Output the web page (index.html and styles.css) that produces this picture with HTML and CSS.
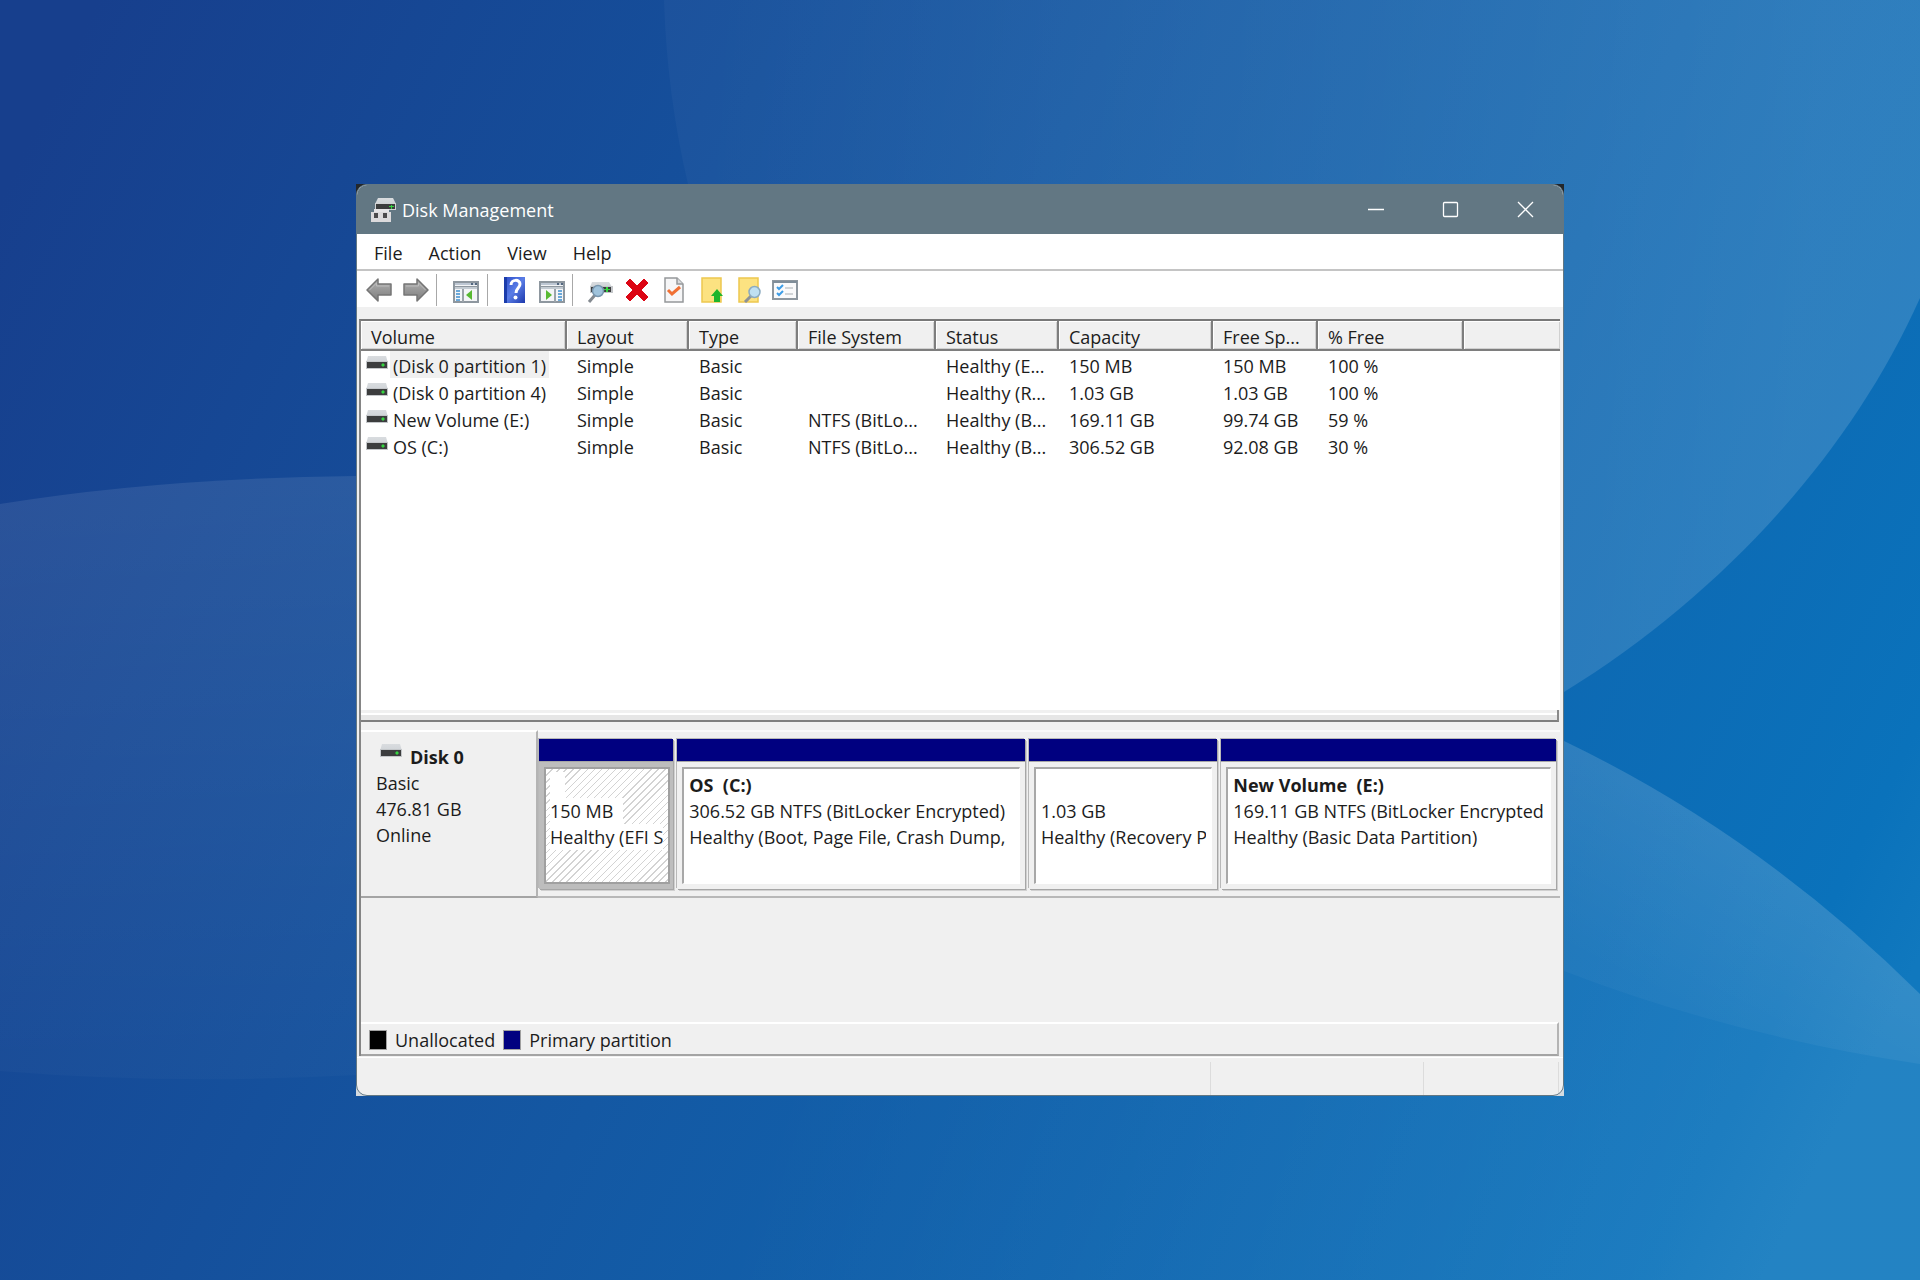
FILE: index.html
```
<!DOCTYPE html>
<html lang="en">
<head>
<meta charset="utf-8">
<title>Disk Management</title>
<link rel="stylesheet" href="styles.css">
</head>
<body>
<svg class="defs" aria-hidden="true">
  <defs>
    <linearGradient id="lid" x1="0" y1="0" x2="0" y2="1"><stop offset="0" stop-color="#d9dcdf"/><stop offset="1" stop-color="#cfd3d7"/></linearGradient>
    <linearGradient id="steel" x1="0" y1="0" x2="0" y2="1"><stop offset="0" stop-color="#b4b4b4"/><stop offset="1" stop-color="#7c7c7c"/></linearGradient>
    <linearGradient id="book" x1="0" y1="0" x2="1" y2="1"><stop offset="0" stop-color="#2b4cc8"/><stop offset=".5" stop-color="#5a7de6"/><stop offset="1" stop-color="#1c38ac"/></linearGradient>
    <symbol id="drive" viewBox="0 0 22 14"><path d="M2 0h18l2 7H0z" fill="url(#lid)"/><path d="M0 5h22v8H0z" fill="#c3c6c9"/><path d="M1 6h20v6H1z" fill="#3c3d3e"/><path d="M15 8.500h4v1h-4zM16 7.500h2v3h-2z" fill="#35d540"/></symbol>
    <symbol id="arrow" viewBox="0 0 26 24"><path d="M1 12 12 1v5h13v11H12v6z" fill="url(#steel)" stroke="#757575" stroke-width="1.5" stroke-linejoin="round"/><path d="M3.500 12 10.500 5v3H23" fill="none" stroke="#bcbcbc"/></symbol>
    <symbol id="pane" viewBox="0 0 26 22"><path d="M1 1h24v20H1z" fill="#f4f5f7" stroke="#8e979f" stroke-width="2"/><path d="M2 2h22v2H2z" fill="#bdc7d3"/><path d="M18 2h2v2h-2zM22 2h2v2h-2z" fill="#53677f"/><path d="M1 5h24v1H1z" fill="#8e979f"/><path d="M2 6h22v2H2z" fill="#c3cbd2"/><path d="M9 8h2v13H9z" fill="#9ba3aa"/><path d="M3 10h4M3 13h4M3 16h4M3 19h4" stroke="#3c8ed0" stroke-width="1.500"/><path d="M13 14l6-5v10z" fill="#58b932"/></symbol>
  </defs>
</svg>
<svg class="wallpaper" viewBox="0 0 1920 1280" preserveAspectRatio="none" aria-hidden="true">
  <defs>
    <linearGradient id="sky" gradientUnits="userSpaceOnUse" x1="0" y1="200" x2="1850" y2="1100"><stop offset="0" stop-color="#173f8d"/><stop offset=".45" stop-color="#1458a3"/><stop offset=".95" stop-color="#0a72bb"/><stop offset="1" stop-color="#1078be"/></linearGradient>
    <linearGradient id="orbA" gradientUnits="userSpaceOnUse" x1="700" y1="200" x2="1800" y2="300"><stop offset="0" stop-color="#fff" stop-opacity=".03"/><stop offset="1" stop-color="#fff" stop-opacity=".14"/></linearGradient>
    <linearGradient id="orbB" gradientUnits="userSpaceOnUse" x1="0" y1="480" x2="0" y2="1080"><stop offset="0" stop-color="#fff" stop-opacity=".09"/><stop offset="1" stop-color="#fff" stop-opacity=".02"/></linearGradient>
    <linearGradient id="orbC" gradientUnits="userSpaceOnUse" x1="1780" y1="820" x2="1680" y2="1010"><stop offset="0" stop-color="#fff" stop-opacity=".1"/><stop offset="1" stop-color="#fff" stop-opacity=".03"/></linearGradient>
    <linearGradient id="orbD" gradientUnits="userSpaceOnUse" x1="800" y1="1000" x2="1700" y2="1280"><stop offset="0" stop-color="#fff" stop-opacity="0"/><stop offset="1" stop-color="#fff" stop-opacity=".08"/></linearGradient>
  </defs>
  <path d="M0 0h1920v1280H0z" fill="url(#sky)"/>
  <path d="M664 0Q667 95 688 184C780 560 1180 900 1564 692C1720 596 1850 455 1920 298V0z" fill="url(#orbA)"/>
  <path d="M0 504Q160 478 356 476L600 780 356 1075Q170 1085 0 1071z" fill="url(#orbB)"/>
  <path d="M700 900L1564 741Q1760 835 1920 994V1280H500z" fill="url(#orbD)"/>
  <path d="M1564 741Q1760 835 1920 994V1064Q1730 1035 1564 971z" fill="url(#orbC)"/>
</svg>

<main class="desktop">
  <div class="backing">
  <section class="window" aria-label="Disk Management">
    <header class="titlebar">
      <svg class="app-icon" viewBox="0 0 26 24" aria-hidden="true"><path d="M7 0h15l3 6H4z" fill="url(#lid)"/><path d="M4 5h21v7H4z" fill="#d0d2d4"/><path d="M5 6h19v5H5z" fill="#3c3d3e"/><path d="M18 8h5v1h-5zM20 7h1v4h-1z" fill="#35d540"/><path d="M3 11h15v4H3z" fill="#e6e4e6"/><path d="M0 14h20v10H0z" fill="#dcdadc"/><path d="M3 15h4v5H3zM12 15h4v5h-4z" fill="#4c4a4c"/></svg>
      <h1 class="title">Disk Management</h1>
      <div class="caption">
        <button type="button" aria-label="Minimize"><svg viewBox="0 0 18 18"><path d="M1 8.500h16"/></svg></button>
        <button type="button" aria-label="Maximize"><svg viewBox="0 0 18 18"><rect x="1.500" y="1.500" width="14" height="14" rx="1"/></svg></button>
        <button type="button" aria-label="Close"><svg viewBox="0 0 18 18"><path d="M1 1l15 15M16 1L1 16"/></svg></button>
      </div>
    </header>
    <nav class="menubar">
      <button type="button">File</button><button type="button">Action</button><button type="button">View</button><button type="button">Help</button>
    </nav>
    <div class="toolbar" role="toolbar" aria-label="Tools">
      <button type="button" aria-label="Back"><svg class="icon"><use href="#arrow"/></svg></button>
      <button type="button" aria-label="Forward"><svg class="icon flip"><use href="#arrow"/></svg></button>
      <span class="sep"></span>
      <button type="button" aria-label="Show console tree" class="wide"><svg class="icon low"><use href="#pane"/></svg></button>
      <span class="sep"></span>
      <button type="button" aria-label="Help"><svg class="icon" viewBox="0 0 26 26"><path d="M2 0h21v26H2z" fill="url(#book)"/><path d="M2 0h3v26H2z" fill="#1b3cab"/><path d="M9 8c0-6 9-6 9-1 0 4-4 4-4 9" fill="none" stroke="#fff" stroke-width="3"/><circle cx="13.500" cy="20.500" r="2" fill="#fff"/></svg></button>
      <button type="button" aria-label="Show action pane"><svg class="icon low" viewBox="0 0 26 22"><path d="M1 1h24v20H1z" fill="#f4f5f7" stroke="#8e979f" stroke-width="2"/><path d="M2 2h22v2H2z" fill="#bdc7d3"/><path d="M18 2h2v2h-2zM22 2h2v2h-2z" fill="#53677f"/><path d="M1 5h24v1H1z" fill="#8e979f"/><path d="M2 6h22v2H2z" fill="#c3cbd2"/><path d="M15 8h2v13h-2z" fill="#9ba3aa"/><path d="M19 10h4M19 13h4M19 16h4M19 19h4" stroke="#3c8ed0" stroke-width="1.500"/><path d="M13 14L7 9v10z" fill="#58b932"/></svg></button>
      <span class="sep"></span>
      <button type="button" aria-label="Rescan disks"><svg class="icon" viewBox="0 0 26 26"><path d="M5 5h17l3 5H3z" fill="url(#lid)"/><path d="M3 9h23v7H3z" fill="#c3c6c9"/><path d="M4 10h20v5H4z" fill="#3c3d3e"/><path d="M17 12h6v1h-6zM19 10h2v5h-2z" fill="#35d540"/><path d="M8 18l-6 7" stroke="#848a90" stroke-width="3"/><circle cx="11" cy="14" r="5.500" fill="#9fc3dc" stroke="#7896ae" stroke-width="1.500"/></svg></button>
      <button type="button" aria-label="Delete"><svg class="icon" viewBox="0 0 26 26"><path d="M6 2l7 7 7-7 4 4-7 7 7 7-4 4-7-7-7 7-4-4 7-7-7-7z" fill="#dc0614" stroke="#dc0614"/></svg></button>
      <button type="button" aria-label="Properties"><svg class="icon" viewBox="0 0 26 26"><path d="M4 1h12l6 6v18H4z" fill="#f6f6f7" stroke="#95989b" stroke-width="1.500"/><path d="M16 1v6h6" fill="#d8dadc" stroke="#95989b" stroke-width="1.500"/><path d="M7 13l4 4 8-7" fill="none" stroke="#f07034" stroke-width="3"/></svg></button>
      <button type="button" aria-label="Open"><svg class="icon" viewBox="0 0 26 26"><path d="M4 1h19v24H4z" fill="#fce281" stroke="#edc84f" stroke-width="1.500"/><path d="M19 12l6 7h-3v6h-6v-6h-3z" fill="#1fb52c"/></svg></button>
      <button type="button" aria-label="Explore"><svg class="icon" viewBox="0 0 26 26"><path d="M4 1h19v24H4z" fill="#fce281" stroke="#edc84f" stroke-width="1.500"/><path d="M16 19l-6 6" stroke="#8d9297" stroke-width="3"/><circle cx="19.500" cy="15" r="5.500" fill="#bfe0f2" stroke="#8cabc0" stroke-width="1.500"/></svg></button>
      <button type="button" aria-label="Options"><svg class="icon list" viewBox="0 0 26 20"><path d="M1 1h24v18H1z" fill="#fafafb" stroke="#8e979f" stroke-width="2"/><path d="M1 1h24v2H1z" fill="#7f8d99"/><path d="M5 7l2 2 4-4M5 13l2 2 4-4" fill="none" stroke="#3c9ce6" stroke-width="2"/><path d="M13 8h8M13 14h8" stroke="#c4c8cb" stroke-width="1.500"/></svg></button>
    </div>

    <div class="client">
      <div class="volumes">
        <table>
          <colgroup><col class="c-volume"><col class="c-layout"><col class="c-type"><col class="c-fs"><col class="c-status"><col class="c-capacity"><col class="c-free"><col class="c-percent"><col></colgroup>
          <thead><tr><th>Volume</th><th>Layout</th><th>Type</th><th>File System</th><th>Status</th><th>Capacity</th><th>Free Sp...</th><th>% Free</th><th></th></tr></thead>
          <tbody>
            <tr><td><span class="name"><svg class="drive"><use href="#drive"/></svg><span class="label selected">(Disk 0 partition 1)</span></span></td><td>Simple</td><td>Basic</td><td></td><td>Healthy (E...</td><td>150 MB</td><td>150 MB</td><td>100 %</td><td></td></tr>
            <tr><td><span class="name"><svg class="drive"><use href="#drive"/></svg><span class="label">(Disk 0 partition 4)</span></span></td><td>Simple</td><td>Basic</td><td></td><td>Healthy (R...</td><td>1.03 GB</td><td>1.03 GB</td><td>100 %</td><td></td></tr>
            <tr><td><span class="name"><svg class="drive"><use href="#drive"/></svg><span class="label">New Volume (E:)</span></span></td><td>Simple</td><td>Basic</td><td>NTFS (BitLo...</td><td>Healthy (B...</td><td>169.11 GB</td><td>99.74 GB</td><td>59 %</td><td></td></tr>
            <tr><td><span class="name"><svg class="drive"><use href="#drive"/></svg><span class="label">OS (C:)</span></span></td><td>Simple</td><td>Basic</td><td>NTFS (BitLo...</td><td>Healthy (B...</td><td>306.52 GB</td><td>92.08 GB</td><td>30 %</td><td></td></tr>
          </tbody>
        </table>
      </div>
      <div class="splitter"></div>
      <div class="disks">
        <div class="disk">
          <div class="disk-info">
            <h2><svg class="drive"><use href="#drive"/></svg>Disk 0</h2>
            <p>Basic</p><p>476.81 GB</p><p>Online</p>
          </div>
          <div class="partitions">
            <article class="partition efi active"><div class="bar"></div><div class="frame"><div class="body"><h3><span>&nbsp;</span></h3><p><span>150 MB</span></p><p><span>Healthy (EFI S</span></p></div></div></article>
            <article class="partition os"><div class="bar"></div><div class="frame"><div class="body"><h3>OS&nbsp; (C:)</h3><p>306.52 GB NTFS (BitLocker Encrypted)</p><p>Healthy (Boot, Page File, Crash Dump,</p></div></div></article>
            <article class="partition recovery"><div class="bar"></div><div class="frame"><div class="body"><h3>&nbsp;</h3><p>1.03 GB</p><p>Healthy (Recovery P</p></div></div></article>
            <article class="partition data"><div class="bar"></div><div class="frame"><div class="body"><h3>New Volume&nbsp; (E:)</h3><p>169.11 GB NTFS (BitLocker Encrypted</p><p>Healthy (Basic Data Partition)</p></div></div></article>
          </div>
        </div>
      </div>
      <div class="legend">
        <span class="key"><i class="swatch unallocated"></i>Unallocated</span>
        <span class="key"><i class="swatch primary"></i>Primary partition</span>
      </div>
    </div>
    <footer class="statusbar"><span class="grow"></span><span class="cell mid"></span><span class="cell end"></span></footer>
  </section>
  </div>
</main>
</body>
</html>
```
FILE: styles.css
```
* { box-sizing: border-box; }

body {
  margin: 0;
  color: #1c1c1c;
  font: 18px/26px "Open Sans", "Noto Sans", sans-serif;
  background: #1457a4;
}

h1, h2, h3, p { margin: 0; font-size: inherit; }

button {
  margin: 0;
  padding: 0;
  border: 0;
  background: none;
  color: inherit;
  font: inherit;
}

.defs { position: absolute; width: 0; height: 0; }

.wallpaper {
  position: fixed;
  inset: 0;
  z-index: -1;
  width: 100%;
  height: 100%;
}

.desktop {
  display: flex;
  min-height: 100vh;
  padding: 184px 356px;
}

/* Square backing that shows behind the rounded window corners */
.backing {
  display: flex;
  flex: 1;
  min-width: 0;
  background: linear-gradient(#23272b 50%, #d5dbe0 50%);
}

.window {
  display: flex;
  flex: 1;
  flex-direction: column;
  min-width: 0;
  overflow: hidden;
  border: 1px solid #627783;
  border-radius: 11px;
  background: #f0f0f0;
}

.titlebar {
  display: flex;
  align-items: center;
  height: 49px;
  padding-left: 14px;
  background: #627783;
  color: #fff;
}

.app-icon { width: 26px; height: 24px; }

.title { margin-left: 5px; font-weight: 400; }

.caption { display: flex; margin-left: auto; }

.caption button { display: grid; place-items: center; width: 75px; height: 50px; }

.caption svg {
  width: 18px;
  height: 18px;
  fill: none;
  stroke: #fff;
  stroke-width: 1.3;
}

.menubar {
  display: flex;
  gap: 26px;
  height: 37px;
  padding: 2px 0 0 17px;
  border-bottom: 2px solid #c4c4c4;
  background: #fff;
}

.toolbar {
  display: flex;
  align-items: center;
  gap: 11px;
  height: 36px;
  padding: 2px 0 0 9px;
  background: #fff;
}

.toolbar button { display: grid; place-items: center; width: 26px; height: 34px; }

.toolbar .wide { margin: 0 1px 0 2px; }

.sep {
  width: 1px;
  height: 32px;
  margin: 0 3px 0 -4px;
  background: #a8a8a8;
}

.icon { width: 26px; height: 26px; }
.icon.flip { transform: scaleX(-1); }
.icon.low { height: 22px; margin-top: 4px; }
.icon.list { height: 20px; }

.client {
  display: flex;
  flex: 1;
  flex-direction: column;
  margin: 12px 3px 0 2px;
  border-top: 2px solid #787878;
  border-left: 2px solid #858585;
}

.volumes { flex: 1; background: #fff; }

table {
  width: 100%;
  border-collapse: separate;
  border-spacing: 0;
  table-layout: fixed;
}

.c-volume { width: 206px; }
.c-layout { width: 122px; }
.c-type { width: 109px; }
.c-fs { width: 138px; }
.c-status { width: 123px; }
.c-capacity { width: 154px; }
.c-free { width: 105px; }
.c-percent { width: 146px; }

th {
  height: 30px;
  padding: 4px 0 0 10px;
  border-right: 2px solid #7e7e7e;
  border-bottom: 2px solid #7e7e7e;
  background: #f0f0f0;
  box-shadow: inset 1px 1px #fff, inset -1px -1px #d0d0d0;
  font-weight: 400;
  text-align: left;
  line-height: 24px;
}

th:last-child { border-right: 0; }

td { height: 27px; padding: 4px 0 0 10px; line-height: 23px; white-space: nowrap; }

td:first-child { padding: 0 0 0 5px; }

.name { display: flex; gap: 2px; height: 27px; }

.drive { width: 22px; height: 14px; margin-top: 5px; }

.label { padding: 4px 3px 0; }
.selected { background: #f0f0f0; }

.splitter {
  height: 12px;
  margin-right: 1px;
  border-right: 2px solid #8a8a8a;
  border-bottom: 2px solid #7e7e7e;
  background: linear-gradient(#f0f0f0 3px, #fff 3px 5px, #e6e6e6 5px);
}

.disks { height: 300px; padding-top: 8px; }

.disk { display: flex; height: 168px; }

.disk-info {
  width: 177px;
  padding: 12px 0 0 15px;
  border: 2px solid #fff;
  border-right-color: #b4b4b4;
  border-bottom-color: #a4a4a4;
  border-left: 0;
}

.disk-info h2 { display: flex; gap: 8px; font-weight: 700; }
.disk-info h2 .drive { margin: 0 0 0 4px; }

.partitions {
  display: flex;
  flex: 1;
  gap: 4px;
  min-width: 0;
  padding: 7px 4px 7px 1px;
  border-top: 2px solid #fafafa;
  border-bottom: 2px solid #b8b8b8;
}

.partition {
  display: flex;
  flex-direction: column;
  min-width: 0;
  box-shadow: 1px 1px #a6a6a6, 2px 2px #d0d0d0, -1px -1px #b8b8b8;
}

.efi { flex: 134 1 0; }
.os { flex: 347 1 0; }
.recovery { flex: 188 1 0; }
.data { flex: 334 1 0; }

.bar { height: 22px; background: #000080; }

.frame {
  display: flex;
  flex: 1;
  padding: 5px;
  border-top: 1px solid #a6a6a6;
}

.body {
  flex: 1;
  min-width: 0;
  padding: 3px 5px 0;
  border: 1px solid #fff;
  border-top: 2px solid #a8a8a8;
  border-left: 2px solid #a8a8a8;
  background: #fff;
}

.body h3, .body p { overflow: hidden; white-space: nowrap; }

.active .frame { padding-right: 3px; background: #bdbdbd; }

.active .body {
  border: 2px solid #a0a0a0;
  padding: 3px 3px 0 4px;
  background: repeating-linear-gradient(135deg, #fff 0 4px, #d3d3d3 4px 5px);
}

.active .body span { display: inline-block; padding-right: 10px; background: #fff; }
.active .body p:last-child span { padding-right: 0; }

.legend {
  display: flex;
  align-items: center;
  gap: 8px;
  height: 34px;
  margin-right: 1px;
  padding: 1px 0 0 8px;
  border-top: 2px solid #fff;
  border-right: 2px solid #b4b4b4;
  border-bottom: 2px solid #a4a4a4;
}

.key { display: flex; align-items: center; gap: 8px; }

.swatch { width: 18px; height: 20px; border: 1px solid #a0a0a0; }
.unallocated { background: #000; }
.primary { background: #000080; }

.statusbar {
  display: flex;
  height: 38px;
  margin-top: 1px;
  padding: 4px 4px 0 0;
  border-top: 1px solid #fff;
}

.grow { flex: 1; }
.cell { border-left: 1px solid #dcdcdc; }
.mid { width: 213px; }
.end { width: 136px; border-right: 1px solid #dcdcdc; }
```
